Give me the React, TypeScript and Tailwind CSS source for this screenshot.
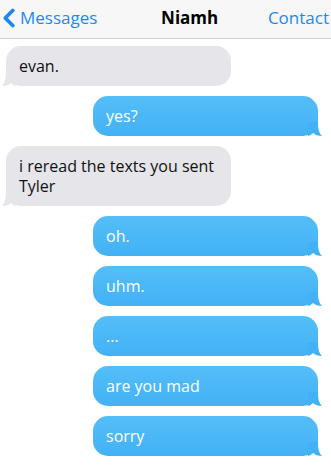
import { ChevronLeft } from "lucide-react";

type Msg = { from: "them" | "me"; text: string };

const messages: Msg[] = [
  { from: "them", text: "evan." },
  { from: "me", text: "yes?" },
  { from: "them", text: "i reread the texts you sent Tyler" },
  { from: "me", text: "oh." },
  { from: "me", text: "uhm." },
  { from: "me", text: "..." },
  { from: "me", text: "are you mad" },
  { from: "me", text: "sorry" },
];

function Tail({ color, flip }: { color: string; flip?: boolean }) {
  return (
    <svg
      width="14"
      height="14"
      viewBox="0 0 14 14"
      className={
        flip
          ? "absolute -left-[4px] bottom-0 -scale-x-100"
          : "absolute -right-[4px] bottom-0"
      }
    >
      <path d="M0 0 H10 C10 7 11 11 14 14 C10 14 7 13 5 11 C3 13 1 14 0 14 Z" fill={color} />
    </svg>
  );
}

function Bubble({ msg }: { msg: Msg }) {
  const mine = msg.from === "me";
  return (
    <div className={mine ? "flex justify-end pr-[13px]" : "flex justify-start pl-[6px]"}>
      <div
        className={
          mine
            ? "relative w-[225px] rounded-[15px] bg-gradient-to-b from-[#53bef8] to-[#43b1f5] px-[13px] py-[10px] text-white"
            : "relative w-[225px] rounded-[15px] bg-[#e5e5ea] px-[13px] py-[10px] text-[#111]"
        }
      >
        <p className="relative z-10 text-[16px] leading-[20px]">{msg.text}</p>
        <Tail color={mine ? "#43b1f5" : "#e5e5ea"} flip={!mine} />
      </div>
    </div>
  );
}

export default function App() {
  return (
    <div className="h-[466px] w-[331px] overflow-hidden bg-white font-['Open_Sans',sans-serif]">
      <header className="flex h-[39px] items-center justify-between border-b border-[#d0d0d4] bg-[#f7f7f7] pr-[2px] text-[17px]">
        <div className="flex items-center text-[#1e88f0]">
          <ChevronLeft className="h-[30px] w-[30px] -ml-[6px] -mt-[2px]" strokeWidth={3} />
          <span className="-ml-[4px] -mt-[2px]">Messages</span>
        </div>
        <span className="ml-[14px] -mt-[2px] font-bold text-black">Niamh</span>
        <span className="-mt-[2px] text-[#1e88f0]">Contact</span>
      </header>
      <div className="flex flex-col gap-[10px] pt-[7px]">
        {messages.map((m, i) => (
          <Bubble key={i} msg={m} />
        ))}
      </div>
    </div>
  );
}
